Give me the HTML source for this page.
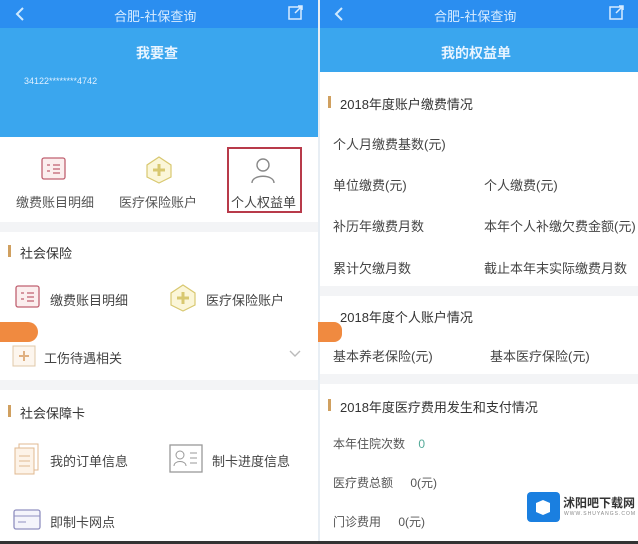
<!DOCTYPE html>
<html><head><meta charset="utf-8"><style>
*{margin:0;padding:0;box-sizing:border-box}
body{width:638px;height:544px;overflow:hidden;background:#fff;font-family:"Liberation Sans","Noto Sans CJK SC",sans-serif;color:#333;position:relative}
.a{position:absolute;white-space:nowrap}
.top{background:#2b8ef0;height:28px}
.t{color:#d8ecff;font-size:13px}
.bar{width:3px;height:12px;background:#d0a060}
.f13{font-size:13px}
.sep{background:#f3f4f6}
</style></head><body>
<!-- left panel -->
<div class="a top" style="left:0;top:0;width:318px"></div>
<div class="a" style="left:0;top:28px;width:318px;height:109px;background:#3aa6ee"></div>
<svg class="a" style="left:14px;top:6px" width="12" height="16"><path d="M9 2 L3 8 L9 14" stroke="#cfeaff" stroke-width="2" fill="none"/></svg>
<div class="a t" style="left:114px;top:6px">合肥-社保查询</div>
<svg class="a" style="left:287px;top:5px" width="18" height="16"><rect x="2" y="2" width="12" height="12" fill="none" stroke="#d8ecff" stroke-width="1.5"/><path d="M8 8 L15 1 M11 1 H15 V5" stroke="#d8ecff" stroke-width="1.5" fill="none"/></svg>
<div class="a" style="left:136px;top:43px;color:#e8f4ff;font-size:14px;font-weight:bold">我要查</div>
<div class="a" style="left:24px;top:76px;color:#e0f0ff;font-size:9px">34122********4742</div>
<div class="a sep" style="left:0;top:137px;width:318px;height:6px;background:#fff"></div>
<!-- icons row -->
<svg class="a" style="left:41px;top:157px" width="26" height="24"><rect x="1" y="1" width="23" height="21" rx="2" fill="#fbeeee" stroke="#c06070" stroke-width="1.3"/><path d="M6 8h3M6 14h3M12 8h7M12 12h7M12 16h7" stroke="#c06070" stroke-width="1.2"/></svg>
<div class="a f13" style="left:16px;top:192px;color:#555">缴费账目明细</div>
<svg class="a" style="left:144px;top:155px" width="30" height="30"><path d="M15 2 L27 10 L27 22 L15 28 L3 22 L3 10Z" fill="#fbf6d8" stroke="#d8c870" stroke-width="1.2"/><path d="M15 9v12M9 15h12" stroke="#d8c870" stroke-width="3"/></svg>
<div class="a f13" style="left:119px;top:192px;color:#555">医疗保险账户</div>
<div class="a" style="left:227px;top:147px;width:75px;height:66px;border:2px solid #b83a4a"></div>
<svg class="a" style="left:249px;top:156px" width="28" height="28"><circle cx="14" cy="9" r="6" fill="none" stroke="#888" stroke-width="1.4"/><path d="M3 27 C3 18 25 18 25 27" fill="none" stroke="#888" stroke-width="1.4"/></svg>
<div class="a f13" style="left:231px;top:192px;color:#444">个人权益单</div>
<div class="a sep" style="left:0;top:222px;width:318px;height:10px"></div>
<div class="a bar" style="left:8px;top:245px"></div>
<div class="a f13" style="left:20px;top:243px">社会保险</div>
<svg class="a" style="left:15px;top:285px" width="26" height="24"><rect x="1" y="1" width="23" height="21" rx="2" fill="#fbeeee" stroke="#c06070" stroke-width="1.3"/><path d="M6 8h3M6 14h3M12 8h7M12 12h7M12 16h7" stroke="#c06070" stroke-width="1.2"/></svg>
<div class="a f13" style="left:50px;top:290px;color:#444">缴费账目明细</div>
<svg class="a" style="left:168px;top:283px" width="30" height="30"><path d="M15 2 L27 10 L27 22 L15 28 L3 22 L3 10Z" fill="#fbf6d8" stroke="#d8c870" stroke-width="1.2"/><path d="M15 9v12M9 15h12" stroke="#d8c870" stroke-width="3"/></svg>
<div class="a f13" style="left:206px;top:290px;color:#444">医疗保险账户</div>
<div class="a" style="left:0;top:322px;width:38px;height:20px;background:#f08a40;border-radius:0 10px 10px 0"></div>
<svg class="a" style="left:12px;top:345px" width="24" height="22"><rect x="1" y="1" width="22" height="20" fill="#fdf6ee" stroke="#e0c8a8"/><path d="M12 6v10M7 11h10" stroke="#e0b080" stroke-width="2"/></svg>
<div class="a f13" style="left:44px;top:348px;color:#444">工伤待遇相关</div>
<svg class="a" style="left:289px;top:350px" width="12" height="8"><path d="M1 1 L6 6 L11 1" stroke="#bbb" fill="none" stroke-width="1.4"/></svg>
<div class="a sep" style="left:0;top:380px;width:318px;height:10px"></div>
<div class="a bar" style="left:8px;top:405px"></div>
<div class="a f13" style="left:20px;top:403px">社会保障卡</div>
<svg class="a" style="left:14px;top:443px" width="26" height="32"><rect x="5" y="1" width="19" height="26" fill="#fff" stroke="#e0b890"/><rect x="1" y="5" width="19" height="26" fill="#fdf3e8" stroke="#e0b890"/><path d="M5 13h11M5 18h11M5 23h11" stroke="#e0b890"/></svg>
<div class="a f13" style="left:50px;top:451px;color:#444">我的订单信息</div>
<svg class="a" style="left:169px;top:444px" width="34" height="30"><rect x="1" y="1" width="32" height="27" fill="#fff" stroke="#999" stroke-width="1.3"/><circle cx="11" cy="11" r="4" fill="none" stroke="#999"/><path d="M5 22c0-6 12-6 12 0M21 9h7M21 14h7M21 19h7" stroke="#999" fill="none"/></svg>
<div class="a f13" style="left:212px;top:451px;color:#444">制卡进度信息</div>
<svg class="a" style="left:13px;top:508px" width="28" height="24"><rect x="1" y="2" width="26" height="19" rx="2" fill="#f4f4fb" stroke="#9090c0" stroke-width="1.3"/><path d="M1 8h26M5 14h8" stroke="#9090c0"/></svg>
<div class="a f13" style="left:50px;top:512px;color:#444">即制卡网点</div>
<!-- right panel -->
<div class="a top" style="left:318px;top:0;width:320px"></div>
<div class="a" style="left:318px;top:28px;width:320px;height:44px;background:#3aa6ee"></div>
<div class="a" style="left:318px;top:0;width:2px;height:544px;background:#e8eef4"></div>
<svg class="a" style="left:333px;top:6px" width="12" height="16"><path d="M9 2 L3 8 L9 14" stroke="#cfeaff" stroke-width="2" fill="none"/></svg>
<div class="a t" style="left:434px;top:6px">合肥-社保查询</div>
<svg class="a" style="left:608px;top:5px" width="18" height="16"><rect x="2" y="2" width="12" height="12" fill="none" stroke="#d8ecff" stroke-width="1.5"/><path d="M8 8 L15 1 M11 1 H15 V5" stroke="#d8ecff" stroke-width="1.5" fill="none"/></svg>
<div class="a" style="left:441px;top:43px;color:#e8f4ff;font-size:14px;font-weight:bold">我的权益单</div>
<div class="a bar" style="left:328px;top:96px"></div>
<div class="a f13" style="left:340px;top:94px">2018年度账户缴费情况</div>
<div class="a f13" style="left:333px;top:134px;color:#444">个人月缴费基数(元)</div>
<div class="a f13" style="left:333px;top:175px;color:#444">单位缴费(元)</div>
<div class="a f13" style="left:484px;top:175px;color:#444">个人缴费(元)</div>
<div class="a f13" style="left:333px;top:216px;color:#444">补历年缴费月数</div>
<div class="a f13" style="left:484px;top:216px;color:#444">本年个人补缴欠费金额(元)</div>
<div class="a f13" style="left:333px;top:258px;color:#444">累计欠缴月数</div>
<div class="a f13" style="left:484px;top:258px;color:#444">截止本年末实际缴费月数</div>
<div class="a sep" style="left:320px;top:286px;width:318px;height:10px"></div>
<div class="a f13" style="left:340px;top:307px">2018年度个人账户情况</div>
<div class="a" style="left:318px;top:322px;width:24px;height:20px;background:#f08a40;border-radius:0 8px 8px 0"></div>
<div class="a f13" style="left:333px;top:346px;color:#444">基本养老保险(元)</div>
<div class="a f13" style="left:490px;top:346px;color:#444">基本医疗保险(元)</div>
<div class="a sep" style="left:320px;top:374px;width:318px;height:10px"></div>
<div class="a bar" style="left:328px;top:399px"></div>
<div class="a f13" style="left:340px;top:397px">2018年度医疗费用发生和支付情况</div>
<div class="a" style="left:333px;top:435px;font-size:12px;color:#555">本年住院次数 <span style="margin-left:10px;color:#5a9">0</span></div>
<div class="a" style="left:333px;top:474px;font-size:12px;color:#555">医疗费总额 <span style="margin-left:14px">0(元)</span></div>
<div class="a" style="left:333px;top:513px;font-size:12px;color:#555">门诊费用 <span style="margin-left:14px">0(元)</span></div>
<!-- watermark logo -->
<div class="a" style="left:527px;top:492px;width:33px;height:30px;background:#1a7fe0;border-radius:4px"></div>
<svg class="a" style="left:533px;top:497px" width="20" height="20"><path d="M3 6 L10 3 L17 6 L17 15 L10 18 L3 15Z" fill="#fff"/></svg>
<div class="a" style="left:563px;top:494px;font-size:12px;font-weight:bold;color:#333">沭阳吧下载网</div>
<div class="a" style="left:564px;top:511px;font-size:5px;color:#888;letter-spacing:1px">WWW.SHUYANGS.COM</div>
<div class="a" style="left:0;top:541px;width:638px;height:3px;background:#333"></div>
</body></html>
